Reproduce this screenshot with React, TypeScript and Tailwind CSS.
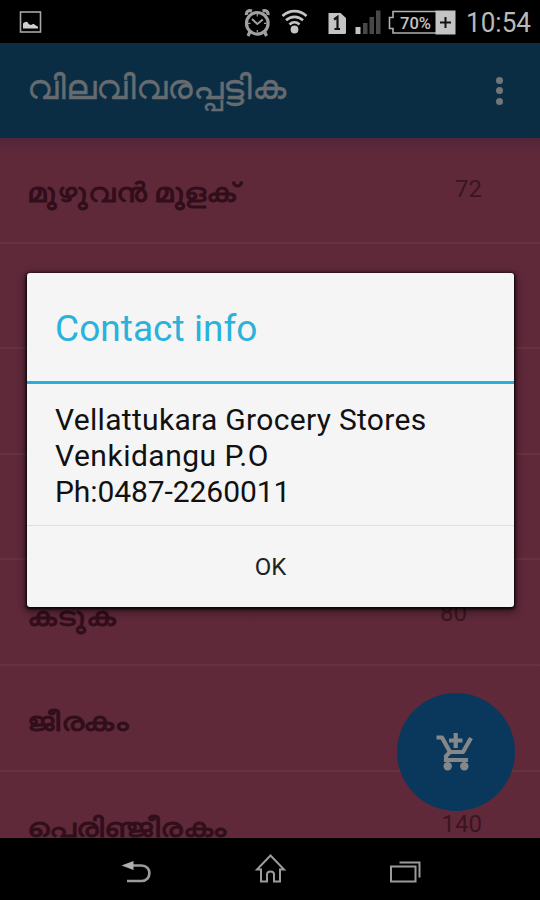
import React from 'react';

interface GroceryItem {
  name: string;
  price: string;
  nameClass: string;
  priceClass: string;
}

// \u200c keeps the vowel sign separate from its consonant
const items: GroceryItem[] = [
  { name: 'മ\u200cുഴ\u200cുവൻ മ\u200cുള\u200cക്', price: '72', nameClass: 'scale-x-[1.15] pt-[36px]', priceClass: 'mr-[58px] pt-[35px]' },
  { name: '', price: '', nameClass: '', priceClass: '' },
  { name: '', price: '', nameClass: '', priceClass: '' },
  { name: '', price: '', nameClass: '', priceClass: '' },
  { name: 'കട\u200cുക', price: '80', nameClass: 'scale-x-[1.155] pt-[38px]', priceClass: 'mr-[73px] pt-[37px]' },
  { name: 'ജീരകം', price: '', nameClass: 'scale-x-[1.2] pt-[37px]', priceClass: '' },
  { name: 'പെരിഞ്ജീരകം', price: '140', nameClass: 'scale-x-[1.17] pt-[37px]', priceClass: 'mr-[58px] pt-[36px]' },
];

const StatusBar: React.FC = () => (
  <div className="h-[43px] shrink-0 bg-black">
    <svg className="block" width="540" height="43" viewBox="0 0 540 43" fill="none">
      {/* picture notification */}
      <rect x="20.5" y="12" width="20" height="20" stroke="#a6a6a6" strokeWidth="1.6" />
      <path d="M23 28.5v-5l2-1.5 2-.2 2 2.4 2 .8 2.5-1.2 2 1.4 2.5 1.600v1.700z" fill="#cfcfcf" />
      {/* alarm */}
      <g stroke="#a0a0a0">
        <circle cx="257.3" cy="23.3" r="10.8" strokeWidth="3.2" />
        <path d="M252 19l5.300 5 5.500-4.500" strokeWidth="2" />
        <path d="M257.300 14v2.500M257.300 30v2.500M248 23.300h2.500M264 23.300h2.500" strokeWidth="1.200" />
        <path d="M246.500 15c-.5-4 2.500-5 5.500-4M268 15c.5-4-2.500-5-5.500-4M250 31.500l-2 4.500M264.500 31.500l2 4.500" strokeWidth="3.200" />
      </g>
      {/* wifi */}
      <g stroke="#c4c4c4" strokeWidth="2.700">
        <path d="M282.500 16c7-6.500 17-6.500 24 0" />
        <path d="M286 20.300c5-4.700 12-4.700 17 0" />
        <path d="M289.500 24.400c3-2.700 7-2.700 10 0" />
        <circle cx="294.500" cy="29.500" r="3.900" fill="#c4c4c4" stroke="none" />
      </g>
      {/* sim slot */}
      <path d="M328.500 13h12l5.500 5v14.500q0 1.500-1.500 1.500h-16z" fill="#c4c4c4" />
      <path d="M334 19.500l3.500-2.500v12M334.500 29h5.500" stroke="#111" strokeWidth="2.200" />
      {/* signal */}
      <path d="M355.500 27h5v7h-5z" fill="#c4c4c4" />
      <path d="M363 23h4.500v11H363zM369.500 17h4.500v17h-4.500zM376 10.500h4.500V34H376z" fill="#484848" />
      {/* battery */}
      <path d="M436 11.500h-43v6h-3.500v11h3.500v4.500h43" stroke="#b0b0b0" strokeWidth="1.600" />
      <text x="400" y="28.700" fontSize="17" textLength="31" lengthAdjust="spacingAndGlyphs" fontFamily="Roboto, sans-serif" fontWeight="500" fill="#c4c4c4">70%</text>
      <rect x="435.500" y="10.500" width="20" height="24" fill="#c4c4c4" />
      <path d="M440 22.500h11M445.500 17v11" stroke="#111" strokeWidth="2" />
      <text x="466" y="32" fontSize="27" textLength="65" lengthAdjust="spacingAndGlyphs" fontFamily="Roboto, sans-serif" fill="#b9b9b9">10:54</text>
    </svg>
  </div>
);

const Toolbar: React.FC = () => (
  <header className="flex h-[95px] shrink-0 items-center justify-between bg-[#0b2d44] pl-[27px] pr-[37px]">
    <h1 className="origin-left scale-x-[1.085] whitespace-nowrap pb-[5px] text-[33px] leading-[40px] text-[#666b70] [-webkit-text-stroke:0.3px_#666b70]">വിലവിവരപ്പട്ടിക</h1>
    <div className="flex flex-col gap-[3.5px]">
      <span className="size-[7px] rounded-full bg-[#737678]" />
      <span className="size-[7px] rounded-full bg-[#737678]" />
      <span className="size-[7px] rounded-full bg-[#737678]" />
    </div>
  </header>
);

const ContactDialog: React.FC = () => (
  <div className="absolute left-[27px] top-[273px] flex h-[334px] w-[487px] flex-col rounded-[3px] bg-[#f5f5f5] shadow-[0_1px_3px_1px_rgba(0,0,0,0.9),0_3px_9px_2px_rgba(0,0,0,0.45)]">
    <h2 className="flex h-[108px] items-center pl-7 pt-1 text-[37px] tracking-[0.05px] text-[#2ab1dc]">
      <span className="whitespace-nowrap">Contact info</span>
    </h2>
    <div className="h-[3px] bg-[#2aaede]" />
    <div className="h-[141px] whitespace-nowrap pl-7 pt-[18px] text-[30px] leading-[36px] text-[#111]">
      <p className="tracking-[0.31px]">Vellattukara Grocery Stores</p>
      <p className="tracking-[0.5px]">Venkidangu P.O</p>
      <p className="tracking-[-0.08px]">Ph:0487-2260011</p>
    </div>
    <button type="button" className="flex-1 border-t border-[#dfdfdf] text-[24px] text-[#222]">OK</button>
  </div>
);

const CartButton: React.FC = () => (
  <button type="button" className="absolute left-[397px] top-[693px] flex size-[118px] items-center justify-center rounded-full bg-[#0a385d]">
    <svg className="block" width="118" height="118" viewBox="0 0 118 118" fill="none" stroke="#858789">
      <path d="M39.500 44.500h5.500l8 14.500h13l8-14" strokeWidth="4.200" strokeLinejoin="round" />
      <path d="M58.700 40v15M52 47.500h13.500" strokeWidth="4.200" />
      <path d="M53 59l-4 4v4h22" strokeWidth="4.200" />
      <circle cx="50.700" cy="73.300" r="4.200" fill="#858789" stroke="none" />
      <circle cx="67.300" cy="73.300" r="4.200" fill="#858789" stroke="none" />
    </svg>
  </button>
);

const NavBar: React.FC = () => (
  <nav className="z-10 h-[62px] shrink-0 bg-black">
    <svg className="block" width="540" height="62" viewBox="0 838 540 62" fill="none" stroke="#9b9b9b">
      <path d="M132 865.500h9.500c10.500 0 10.500 15.500 0 15.500H127" strokeWidth="2.700" />
      <path d="M121.500 865.500l12-4.500v9z" fill="#b0b0b0" stroke="none" />
      <path d="M270.500 855.500l13.500 14h-4v12h-6v-7q0-3-3.500-3t-3.500 3v7h-6v-12h-4z" strokeWidth="2" />
      <rect x="391" y="866.500" width="24.500" height="15" strokeWidth="2" />
      <path d="M399.500 862.500h20v15" strokeWidth="2" />
    </svg>
  </nav>
);

export default function App() {
  return (
    <div className="relative flex h-[900px] w-[540px] flex-col overflow-hidden bg-[#5f293a] font-[Roboto,'Noto_Sans',sans-serif]">
      <StatusBar />
      <Toolbar />
      <main className="min-h-0 flex-1 overflow-hidden bg-linear-to-b from-[#54253a] to-[#5f293a] to-[16px]">
        {items.map((item, index) => (
          <div key={index} className="flex h-[105.6px] justify-between border-b-2 border-[#643440] pl-[27px] text-[#310e1a]">
            <span className={`origin-left whitespace-nowrap text-[27px] leading-[38px] [-webkit-text-stroke:0.9px_#310e1a] ${item.nameClass}`}>{item.name}</span>
            <span className={`text-[24px] leading-[32px] text-[#3c1421] ${item.priceClass}`}>{item.price}</span>
          </div>
        ))}
      </main>
      <NavBar />
      <CartButton />
      <ContactDialog />
    </div>
  );
}
